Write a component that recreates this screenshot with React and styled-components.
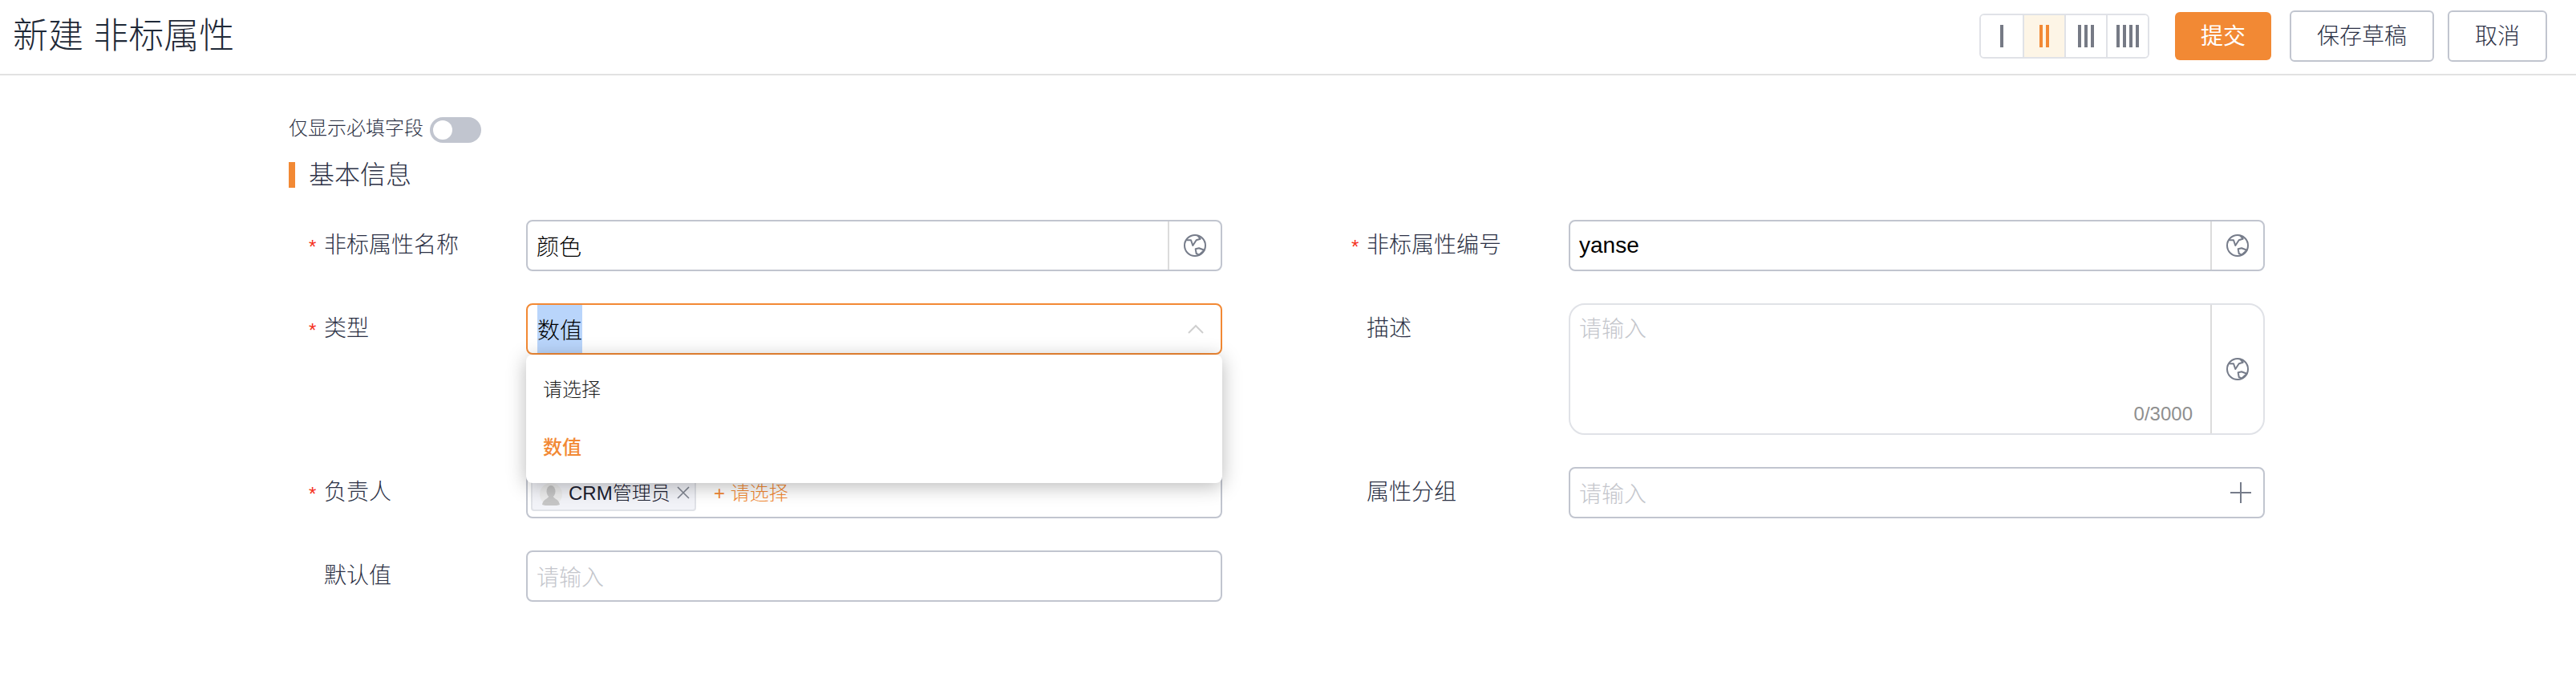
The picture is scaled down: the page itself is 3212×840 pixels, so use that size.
import React from "react";
import styled, { createGlobalStyle } from "styled-components";

const colors = {
  orange: "#f28934",
  text: "#2c3145",
  border: "#c1c5cf",
  light: "#e0e2e7",
  placeholder: "#c4c6cc",
};

const GlobalStyle = createGlobalStyle`
  html, body {
    margin: 0;
    padding: 0;
    background: #fff;
  }
  body {
    font-family: "Liberation Sans", "Noto Sans CJK SC", sans-serif;
    font-weight: 300;
    color: ${colors.text};
  }
  * {
    box-sizing: border-box;
  }
`;

const Page = styled.div`
  width: 3212px;
  height: 840px;
  overflow: hidden;
`;

const Header = styled.header`
  height: 94px;
  padding: 0 36px 2px 16px;
  border-bottom: 2px solid #e2e2e2;
  display: flex;
  align-items: center;
  justify-content: space-between;
`;

const Title = styled.h1`
  margin: -8px 0 0;
  font-size: 44px;
  font-weight: 300;
  color: #1f2937;
`;

const Actions = styled.div`
  display: flex;
  align-items: center;
`;

const ColumnSwitch = styled.div`
  display: flex;
  height: 56px;
  margin-right: 32px;
  border: 2px solid ${colors.light};
  border-radius: 6px;
  overflow: hidden;
`;

const ColumnOption = styled.div`
  width: 52px;
  display: flex;
  align-items: center;
  justify-content: center;
  gap: 4px;
  background: ${(p) => (p.$active ? "#fdf5e6" : "#fff")};
  & + & {
    border-left: 2px solid ${colors.light};
  }
`;

const ColumnBar = styled.i`
  display: block;
  width: 4px;
  height: 28px;
  background: ${(p) => (p.$active ? colors.orange : "#767a85")};
`;

const Button = styled.button`
  height: ${(p) => (p.$primary ? "60px" : "64px")};
  padding: 0 32px 4px;
  margin-left: ${(p) => p.$gap || 0}px;
  font: inherit;
  font-size: 28px;
  font-weight: ${(p) => (p.$primary ? 400 : 300)};
  color: ${(p) => (p.$primary ? "#fff" : colors.text)};
  background: ${(p) => (p.$primary ? colors.orange : "#fff")};
  border: ${(p) => (p.$primary ? "0" : `2px solid ${colors.border}`)};
  border-radius: 6px;
`;

const Content = styled.main`
  padding: 52px 0 0 360px;
`;

const ToggleRow = styled.div`
  display: flex;
  align-items: center;
  height: 32px;
  gap: 8px;
  font-size: 24px;
`;

const ToggleText = styled.span`
  padding-bottom: 10px;
`;

const Toggle = styled.span`
  width: 64px;
  height: 32px;
  padding: 4px;
  border-radius: 16px;
  background: ${colors.border};
  display: block;
  &::before {
    content: "";
    display: block;
    width: 24px;
    height: 24px;
    border-radius: 50%;
    background: #fff;
  }
`;

const SectionTitle = styled.h2`
  margin: 24px 0 40px;
  height: 32px;
  padding: 0 0 6px 17px;
  border-left: 8px solid ${colors.orange};
  display: flex;
  align-items: center;
  font-size: 32px;
  font-weight: 300;
`;

const FormGrid = styled.div`
  display: grid;
  grid-template-columns: 1300px 1300px;
  row-gap: 40px;
  align-items: start;
`;

const Field = styled.div`
  display: flex;
  align-items: flex-start;
  position: relative;
`;

const Label = styled.label`
  width: 296px;
  height: 64px;
  padding: 0 0 6px 44px;
  display: flex;
  align-items: center;
  font-size: 28px;
  position: relative;
`;

const Required = styled.span`
  position: absolute;
  left: 25px;
  top: 20px;
  color: #f5321e;
  font-size: 24px;
  font-weight: 400;
`;

const Control = styled.div`
  width: 868px;
  height: ${(p) => p.$height || 64}px;
  display: flex;
  align-items: stretch;
  background: #fff;
  border: 2px solid ${(p) => p.$border || colors.border};
  border-radius: ${(p) => p.$radius || 8}px;
  position: relative;
  font-size: 28px;
`;

const Value = styled.div`
  flex: 1;
  min-width: 0;
  padding: ${(p) => (p.$top ? "8px 11px 0" : "0 11px")};
  display: flex;
  align-items: ${(p) => (p.$top ? "flex-start" : "center")};
  color: ${(p) => (p.$placeholder ? colors.placeholder : "#000")};
`;

const Selected = styled.span`
  height: 60px;
  margin-left: 1px;
  display: flex;
  align-items: center;
  background: #b9d5fb;
`;

const Addon = styled.div`
  width: 66px;
  flex: none;
  display: flex;
  align-items: center;
  justify-content: center;
  border-left: 2px solid #dcdcdc;
`;

const IconSlot = styled.div`
  width: 66px;
  flex: none;
  padding-left: ${(p) => p.$shift || 0}px;
  display: flex;
  align-items: center;
  justify-content: center;
`;

const Counter = styled.span`
  position: absolute;
  right: 88px;
  bottom: 10px;
  font-size: 24px;
  color: #8f8f8f;
`;

const Dropdown = styled.div`
  position: absolute;
  left: 296px;
  top: 64px;
  width: 868px;
  height: 160px;
  padding: 8px 0;
  background: #fff;
  border-radius: 8px;
  box-shadow: 0 4px 24px rgba(0, 0, 0, 0.28);
  z-index: 2;
`;

const Option = styled.div`
  height: 72px;
  padding: 0 0 6px 21px;
  display: flex;
  align-items: center;
  font-size: 24px;
  font-weight: ${(p) => (p.$active ? 500 : 300)};
  color: ${(p) => (p.$active ? colors.orange : "#1c1c1c")};
`;

const Tags = styled.div`
  flex: 1;
  padding: 0 4px;
  display: flex;
  align-items: center;
`;

const Tag = styled.span`
  width: 206px;
  height: 46px;
  padding: 0 0 0 9px;
  display: flex;
  align-items: center;
  gap: 8px;
  flex: none;
  white-space: nowrap;
  font-size: 24px;
  color: #1c2030;
  background: #f2f3f8;
  border: 2px solid ${colors.light};
  border-radius: 4px;
`;

const TagName = styled.span`
  padding-bottom: 4px;
`;

const AddLink = styled.span`
  margin-left: 22px;
  padding-bottom: 4px;
  font-size: 24px;
  color: ${colors.orange};
`;

const AvatarSvg = styled.svg`
  flex: none;
  margin-top: 3px;
`;

const CloseSvg = styled.svg`
  flex: none;
`;

const GlobeIcon = () => (
  <svg width="30" height="30" viewBox="0 0 30 30" fill="none" stroke="#767c8a" strokeWidth="2" strokeLinejoin="round">
    <circle cx="15" cy="15" r="13" />
    <path d="M4.3 8.3 L10 8.3 L12.3 15 L16.7 8.3 L21.7 6.7 L18.3 2.6" />
    <path d="M15.7 19.3 L20 18.3 L26.7 20.7 L20 26.7 L16.7 25 Z" />
  </svg>
);

const Chevron = () => (
  <svg width="20" height="12" viewBox="0 0 20 12" fill="none" stroke="#cfcfcf" strokeWidth="2">
    <path d="M1 11 L10 2 L19 11" />
  </svg>
);

const Plus = () => (
  <svg width="26" height="26" viewBox="0 0 26 26" stroke="#767c8a" strokeWidth="2">
    <path d="M13 0 V26 M0 13 H26" />
  </svg>
);

const Close = () => (
  <CloseSvg width="16" height="16" viewBox="0 0 16 16" stroke="#7f8490" strokeWidth="1.6">
    <path d="M1 1 L15 15 M15 1 L1 15" />
  </CloseSvg>
);

const Avatar = () => (
  <AvatarSvg width="28" height="28" viewBox="0 0 28 28">
    <circle cx="14" cy="14" r="14" fill="#ececec" />
    <ellipse cx="14" cy="10.5" rx="5.5" ry="7.5" fill="#c6c6c6" />
    <path d="M3 27 C4 20 10 20 11 17 H17 C18 20 24 20 25 27 C20 29 8 29 3 27 Z" fill="#c6c6c6" />
  </AvatarSvg>
);

const COLUMN_OPTIONS = [1, 2, 3, 4];

export default function App() {
  return (
    <Page>
      <GlobalStyle />
      <Header>
        <Title>新建 非标属性</Title>
        <Actions>
          <ColumnSwitch>
            {COLUMN_OPTIONS.map((n) => (
              <ColumnOption key={n} $active={n === 2}>
                {Array.from({ length: n }).map((_, i) => (
                  <ColumnBar key={i} $active={n === 2} />
                ))}
              </ColumnOption>
            ))}
          </ColumnSwitch>
          <Button $primary>提交</Button>
          <Button $gap={23}>保存草稿</Button>
          <Button $gap={17}>取消</Button>
        </Actions>
      </Header>
      <Content>
        <ToggleRow>
          <ToggleText>仅显示必填字段</ToggleText>
          <Toggle />
        </ToggleRow>
        <SectionTitle>基本信息</SectionTitle>
        <FormGrid>
          <Field>
            <Label>
              <Required>*</Required>非标属性名称
            </Label>
            <Control>
              <Value>颜色</Value>
              <Addon>
                <GlobeIcon />
              </Addon>
            </Control>
          </Field>
          <Field>
            <Label>
              <Required>*</Required>非标属性编号
            </Label>
            <Control>
              <Value>yanse</Value>
              <Addon>
                <GlobeIcon />
              </Addon>
            </Control>
          </Field>

          <Field>
            <Label>
              <Required>*</Required>类型
            </Label>
            <Control $border={colors.orange}>
              <Value>
                <Selected>数值</Selected>
              </Value>
              <IconSlot $shift={4}>
                <Chevron />
              </IconSlot>
            </Control>
            <Dropdown>
              <Option>请选择</Option>
              <Option $active>数值</Option>
            </Dropdown>
          </Field>
          <Field>
            <Label>描述</Label>
            <Control $height={164} $border={colors.light} $radius={20}>
              <Value $top $placeholder>
                请输入
              </Value>
              <Counter>0/3000</Counter>
              <Addon>
                <GlobeIcon />
              </Addon>
            </Control>
          </Field>

          <Field>
            <Label>
              <Required>*</Required>负责人
            </Label>
            <Control>
              <Tags>
                <Tag>
                  <Avatar />
                  <TagName>CRM管理员</TagName>
                  <Close />
                </Tag>
                <AddLink>+ 请选择</AddLink>
              </Tags>
            </Control>
          </Field>
          <Field>
            <Label>属性分组</Label>
            <Control>
              <Value $placeholder>请输入</Value>
              <IconSlot $shift={10}>
                <Plus />
              </IconSlot>
            </Control>
          </Field>

          <Field>
            <Label>默认值</Label>
            <Control>
              <Value $placeholder>请输入</Value>
            </Control>
          </Field>
        </FormGrid>
      </Content>
    </Page>
  );
}
